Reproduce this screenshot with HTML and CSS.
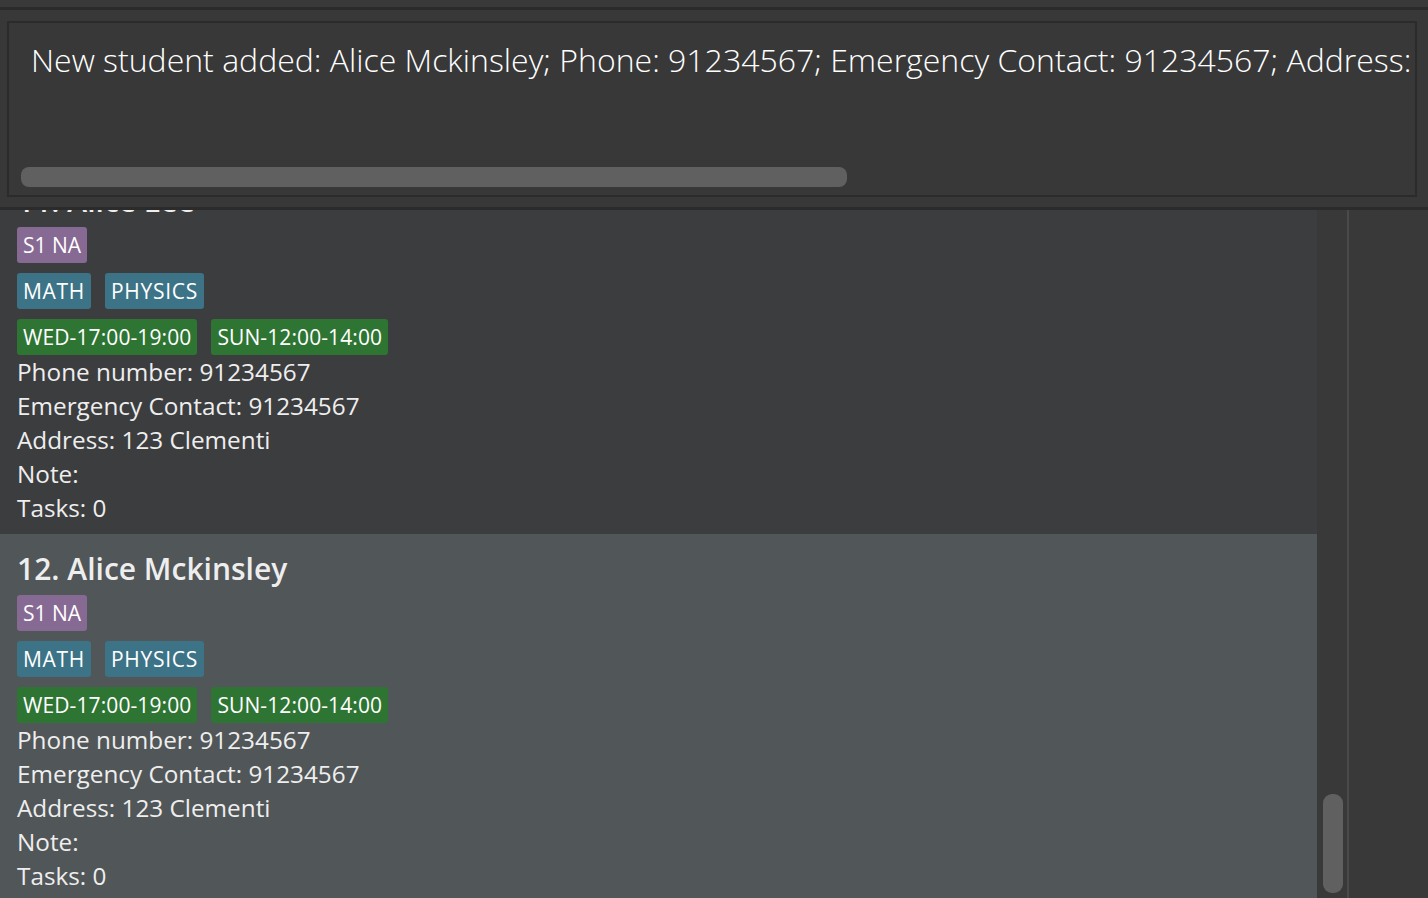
FILE: index.html
```html
<!DOCTYPE html>
<html>
<head>
<meta charset="utf-8">
<link rel="stylesheet" href="styles.css">
</head>
<body>
<div class="app">
  <div class="topbar"></div>
  <div class="result-panel">
    <div class="result-box">
      <div class="result-text">New student added: Alice Mckinsley; Phone: 91234567; Emergency Contact: 91234567; Address:</div>
      <div class="hscroll"><div class="hthumb"></div></div>
    </div>
  </div>
  <div class="main">
    <div class="list">
      <div class="card first">
        <div class="name">11. Alice Lee</div>
        <div class="tags"><span class="tag level">S1 NA</span></div>
        <div class="tags"><span class="tag subject">MATH</span><span class="tag subject">PHYSICS</span></div>
        <div class="tags"><span class="tag time">WED-17:00-19:00</span><span class="tag time">SUN-12:00-14:00</span></div>
        <div class="line">Phone number: 91234567</div>
        <div class="line">Emergency Contact: 91234567</div>
        <div class="line">Address: 123 Clementi</div>
        <div class="line">Note:</div>
        <div class="line">Tasks: 0</div>
      </div>
      <div class="card selected">
        <div class="name">12. Alice Mckinsley</div>
        <div class="tags"><span class="tag level">S1 NA</span></div>
        <div class="tags"><span class="tag subject">MATH</span><span class="tag subject">PHYSICS</span></div>
        <div class="tags"><span class="tag time">WED-17:00-19:00</span><span class="tag time">SUN-12:00-14:00</span></div>
        <div class="line">Phone number: 91234567</div>
        <div class="line">Emergency Contact: 91234567</div>
        <div class="line">Address: 123 Clementi</div>
        <div class="line">Note:</div>
        <div class="line">Tasks: 0</div>
      </div>
    </div>
    <div class="vscroll"><div class="vthumb"></div></div>
    <div class="side"></div>
  </div>
</div>
</body>
</html>
```

FILE: styles.css
```css
html, body {
  margin: 0;
  padding: 0;
  background: #383838;
  overflow: hidden;
}
.app {
  width: 1428px;
  height: 898px;
  display: flex;
  flex-direction: column;
  background: #383838;
  font-family: "Open Sans", "Liberation Sans", sans-serif;
}
.topbar {
  height: 7px;
  flex: none;
  background: #393939;
}
.result-panel {
  flex: none;
  height: 186px;
  border-top: 3px solid #2b2b2b;
  border-bottom: 3px solid #2b2b2b;
  background: #383838;
  box-sizing: content-box;
  padding: 11px 11px 0 7px;
}
.result-box {
  height: 172px;
  border: 2px solid #2b2b2b;
  background: #383838;
  overflow: hidden;
  display: flex;
  flex-direction: column;
}
.result-text {
  padding: 17px 0 0 22px;
  height: 40px;
  line-height: 40px;
  font-size: 32px;
  font-weight: 300;
  color: #ffffff;
  white-space: nowrap;
}
.hscroll {
  margin-top: 87px;
  padding-left: 12px;
}
.hthumb {
  width: 826px;
  height: 20px;
  border-radius: 8px;
  background: #606060;
}
.main {
  flex: 1;
  display: flex;
  min-height: 0;
}
.list {
  width: 1317px;
  flex: none;
  overflow: hidden;
  background: #3c3d3f;
}
.card {
  height: 368px;
  box-sizing: border-box;
  padding: 15px 0 0 17px;
  background: #3c3d3f;
  color: #eeeeee;
}
.card.first {
  margin-top: -44px;
}
.card.selected {
  background: #515658;
}
.name {
  height: 40px;
  line-height: 40px;
  font-size: 30px;
  font-weight: 600;
  margin-bottom: 6px;
  white-space: nowrap;
}
.tags {
  display: flex;
  gap: 14px;
  height: 36px;
  margin-bottom: 10px;
}
.card .tags:nth-child(4) {
  margin-bottom: 0;
}
.tag {
  height: 36px;
  line-height: 36px;
  padding: 0 6px;
  border-radius: 3px;
  font-size: 21px;
  color: #ffffff;
  white-space: nowrap;
}
.tag.level { background: #866a94; }
.tag.subject { background: #3d7387; letter-spacing: 0.7px; }
.tag.time { background: #2e7533; letter-spacing: 0.1px; }
.line {
  height: 34px;
  line-height: 33px;
  font-size: 24.3px;
  white-space: nowrap;
}
.vscroll {
  width: 32px;
  flex: none;
  background: #393939;
  border-right: 2px solid #4a4a4a;
  display: flex;
  flex-direction: column;
  justify-content: flex-end;
  align-items: flex-start;
  padding: 0 0 5px 6px;
  box-sizing: border-box;
}
.vthumb {
  width: 20px;
  height: 99px;
  border-radius: 9px;
  background: #606060;
}
.side {
  flex: 1;
  background: #393939;
}
```
